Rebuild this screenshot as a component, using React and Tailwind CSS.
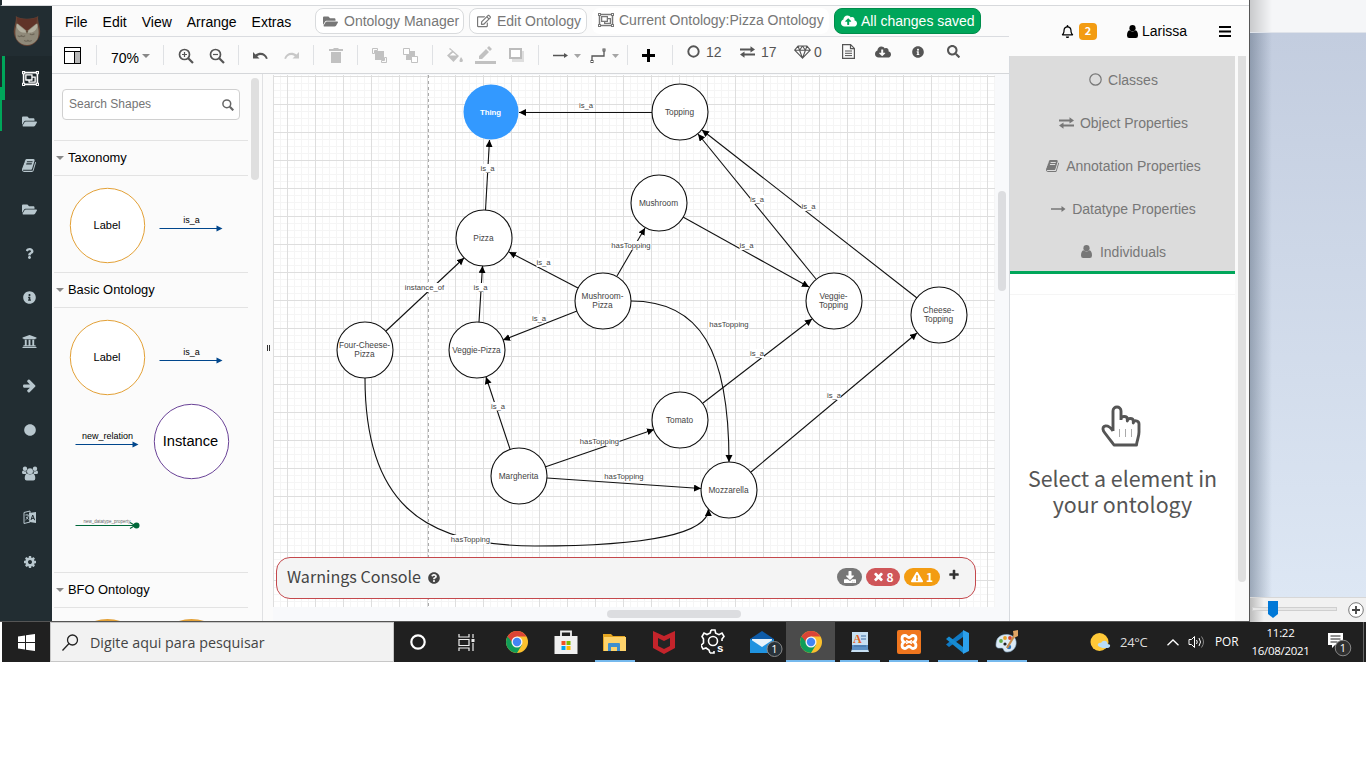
import React from "react";
import {
  FaRegObjectGroup, FaFolderOpen, FaQuestion, FaInfoCircle, FaUniversity,
  FaCircle, FaRegEdit, FaCloudUploadAlt, FaCloudDownloadAlt,
  FaRegBell, FaExclamationTriangle, FaQuestionCircle,
  FaDownload, FaSearch,
} from "react-icons/fa";

const ARIAL = "font-['Liberation_Sans',Arial,sans-serif]";
const SOURCE = "font-['Noto_Sans_CJK_SC',sans-serif]";
const SEGOE = "font-['Open_Sans','Noto_Sans',sans-serif]";

function Glyph({ size, d }) {
  return <svg width={size} height={size} viewBox="0 0 1792 1792" fill="currentColor"><path d={d} /></svg>;
}

const BOOK = "M1639 478q40 57 18 129l-275 906q-19 64-76.500 107.500t-122.500 43.500h-923q-77 0-148.500-53.500t-99.500-131.500q-24-67-2-127 0-4 3-27t4-37q1-8-3-21.500t-3-19.500q2-11 8-21t16.500-23.500 16.500-23.500q23-38 45-91.500t30-91.500q3-10 .5-30t-.5-28q3-11 17-28t17-23q21-36 42-92t25-90q1-9-2.500-32t.5-28q4-13 22-30.500t22-22.500q19-26 42.500-84.500t27.500-96.500q1-8-3-25.500t-2-26.500q2-8 9-18t18-23 17-21q8-12 16.500-30.500t15-35 16-36 19.500-32 26.500-23.500 36-11.500 47.500 5.500l-1 3q38-9 51-9h761q74 0 114 56t18 130l-274 906q-36 119-71.500 153.500t-128.500 34.500h-869q-27 0-38 15-11 16-1 43 24 70 144 70h923q29 0 56-15.500t35-41.500l300-987q7-22 5-57 38 15 59 43zm-1064 2q-4 13 2 22.500t20 9.500h608q13 0 25.500-9.500t16.500-22.500l21-64q4-13-2-22.500t-20-9.500h-608q-13 0-25.500 9.500t-16.500 22.500zm-83 256q-4 13 2 22.500t20 9.500h608q13 0 25.500-9.500t16.500-22.500l21-64q4-13-2-22.500t-20-9.500h-608q-13 0-25.500 9.500t-16.500 22.500z";
const ARROW = "M1600 960q0 54-37 91l-651 651q-39 37-91 37-51 0-90-37l-75-75q-38-38-38-91t38-91l293-293h-704q-52 0-84.500-37.500t-32.500-90.500v-128q0-53 32.500-90.500t84.500-37.500h704l-293-294q-38-36-38-90t38-90l75-75q38-38 90-38 53 0 91 38l651 651q37 35 37 90z";
const TIMES = "M1490 1322q0 40-28 68l-136 136q-28 28-68 28t-68-28l-294-294-294 294q-28 28-68 28t-68-28l-136-136q-28-28-28-68t28-68l294-294-294-294q-28-28-28-68t28-68l136-136q28-28 68-28t68 28l294 294 294-294q28-28 68-28t68 28l136 136q28 28 28 68t-28 68l-294 294 294 294q28 28 28 68z";
const PLUS = "M1600 736v192q0 40-28 68t-68 28h-416v416q0 40-28 68t-68 28h-192q-40 0-68-28t-28-68v-416h-416q-40 0-68-28t-28-68v-192q0-40 28-68t68-28h416v-416q0-40 28-68t68-28h192q40 0 68 28t28 68v416h416q40 0 68 28t28 68z";
const COG = "M1152 896q0-106-75-181t-181-75-181 75-75 181 75 181 181 75 181-75 75-181zm512-109v222q0 12-8 23t-20 13l-185 28q-19 54-39 91 35 50 107 138 10 12 10 25t-9 23q-27 37-99 108t-94 71q-12 0-26-9l-138-108q-44 23-91 38-16 136-29 186-7 28-36 28h-222q-14 0-24.500-8.500t-11.500-21.500l-28-184q-49-16-90-37l-141 107q-10 9-25 9-14 0-25-11-126-114-165-168-7-10-7-23 0-12 8-23 15-21 51-66.500t54-70.500q-27-50-41-99l-183-27q-13-2-21-12.500t-8-23.500v-222q0-12 8-23t19-13l186-28q14-46 39-92-40-57-107-138-10-12-10-24 0-10 9-23 26-36 98.500-107.500t94.500-71.500q13 0 26 10l138 107q44-23 91-38 16-136 29-186 7-28 36-28h222q14 0 24.500 8.500t11.500 21.500l28 184q49 16 90 37l142-107q9-9 24-9 13 0 25 10 129 119 165 170 7 8 7 22 0 12-8 23-15 21-51 66.500t-54 70.500q26 50 41 98l183 28q13 2 21 12.500t8 23.500z";

function Person() {
  return (
    <svg width="11" height="13" viewBox="0 0 11 13" fill="currentColor">
      <circle cx="5.500" cy="3.200" r="3.100" />
      <path d="M2.600 5.300q2.900 2.600 5.800 0Q11 6 11 10.500 11 13 8.800 13H2.200Q0 13 0 10.500 0 6 2.600 5.300z" />
    </svg>
  );
}

function People() {
  return (
    <svg width="16" height="15" viewBox="0 0 16 15" fill="currentColor">
      <circle cx="3" cy="2.800" r="2.200" /><circle cx="13" cy="2.800" r="2.200" />
      <path d="M1 4.500q2 1.500 3.700.5Q3.800 6.500 4.500 8H1.500Q0 8 0 6.500 0 5 1 4.500zM15 4.500q-2 1.500-3.700.5.9 1.500.2 3h3Q16 8 16 6.500 16 5 15 4.500z" />
      <circle cx="8" cy="5.200" r="3" />
      <path d="M5.300 7.500q2.700 2.200 5.400 0 2.600.7 2.600 4.700 0 2.300-2 2.300H4.700q-2 0-2-2.300 0-4 2.600-4.700z" />
    </svg>
  );
}

function Owl() {
  return (
    <svg width="28" height="32" viewBox="0 0 30 34" opacity=".85">
      <path d="M3 1 C8 5 22 5 27 1 C26 7 30 14 29 20 C27 29 21 33 15 33 C9 33 3 29 1 20 C0 14 4 7 3 1Z" fill="#6f4634" />
      <path d="M4 10 C7 6 12 9 15 17 C18 9 23 6 26 10 C28 15 28 22 26 26 C20 34 10 34 4 26 C2 22 2 15 4 10Z" fill="#a39a86" />
      <path d="M4 9 L15 18 L26 9 C27 13 24 18 20 18.500 L15 19 L10 18.500 C6 18 3 13 4 9Z" fill="#cdc8b4" />
      <path d="M4 2 C8 5 22 5 26 2 L25 9 L15 17 L5 9Z" fill="#6b3527" />
      <path d="M13.500 17 h3 l-1.500 3Z" fill="#6f5a44" />
      <path d="M5 22 q2 2 4 0 q2 2 4 0 M18 20 q2 2 5 0 M12 27 q2 2 4 0 q2 2 4 0" stroke="#7a705f" strokeWidth="1.200" fill="none" />
    </svg>
  );
}

function Exchange() {
  return (
    <svg width="15" height="12" viewBox="0 0 15 12" fill="currentColor">
      <path d="M0 2.500h10.500V.3L15 3.400l-4.500 3V4.500H0zM15 9.500H4.500v2.200L0 8.600l4.500-3v1.900H15z" />
    </svg>
  );
}

function LongArrow() {
  return (
    <svg width="15" height="8" viewBox="0 0 15 8" fill="currentColor">
      <path d="M0 3.200h10.500V.9L14.500 4l-4 3.100V4.800H0z" />
    </svg>
  );
}

function Gem() {
  return (
    <svg width="17" height="14" viewBox="0 0 17 14" fill="none" stroke="currentColor" strokeWidth="1.100" strokeLinejoin="round">
      <path d="M4 1h9l3.300 4.200L8.500 13.200.7 5.200zM.7 5.200h15.600M4 1l1.600 4.200 2.900 8 2.900-8L13 1M5.600 5.200 8.500 1l2.900 4.200" />
    </svg>
  );
}

function TextFile() {
  return (
    <svg width="13" height="15" viewBox="0 0 13 15" fill="none" stroke="currentColor">
      <path d="M.6.600h8l3.800 3.800v10H.6zM8.500.600v4h4" strokeWidth="1.200" />
      <path d="M3 7h7M3 9.300h7M3 11.600h7" />
    </svg>
  );
}

function Magnifier({ sign }) {
  return (
    <svg width="16" height="16" viewBox="0 0 16 16" fill="none" stroke="#555" strokeWidth="1.700">
      <circle cx="6.500" cy="6.500" r="5" />
      <path d="M10 10l5 5" strokeWidth="2.200" />
      <path d={sign === "+" ? "M4 6.500h5M6.500 4v5" : "M4 6.500h5"} strokeWidth="1.200" />
    </svg>
  );
}

function LanguageBook() {
  return (
    <svg width="14" height="15" viewBox="0 0 14 15">
      <path d="M1 2.500l6-1.500v11L1 13.500z" fill="none" stroke="#b8c7ce" />
      <path d="M6 3l7-1v11l-6.500-1z" fill="#b8c7ce" />
      <path d="M2.200 5h3.500M4 4v1M2.500 10c1.500-1 2.500-2.500 2.800-5M3 7l2.500 2.500" stroke="#b8c7ce" strokeWidth=".8" fill="none" />
      <path d="M8 10l1.700-5 2 5.200M8.700 8.400h2.300" stroke="#222d32" fill="none" />
    </svg>
  );
}

const railIcons = [
  <FaFolderOpen size={15} />, <Glyph size={15} d={BOOK} />, <FaFolderOpen size={15} />, <FaQuestion size={11} />,
  <FaInfoCircle size={13} />, <FaUniversity size={15} />, <Glyph size={15} d={ARROW} />, <FaCircle size={12} />,
  <People />, <LanguageBook />, <Glyph size={14} d={COG} />,
];

function Rail() {
  return (
    <nav className="relative flex w-[52px] shrink-0 flex-col bg-[#222d32] text-[#b8c7ce]">
      <div className="flex h-[50px] items-center justify-center pl-0.5"><Owl /></div>
      <div className="flex h-11 items-center justify-center bg-[#1e282c] pl-2 text-white">
        <FaRegObjectGroup size={17} />
      </div>
      {railIcons.map((icon, i) => (
        <div key={i} className="flex h-11 items-center justify-center pb-px pl-[7px]">{icon}</div>
      ))}
      <div className="absolute left-0.5 top-[50px] h-11 w-[3px] bg-[#00a65a]" />
      <div className="absolute left-0 top-[81px] h-11 w-0.5 bg-[#00a65a]" />
    </nav>
  );
}

function MenuBar() {
  return (
    <div className="flex h-[31px] items-center border-b border-[#dadce0] bg-[#fbfbfb] text-sm text-black">
      <div className="flex w-[263px] shrink-0 gap-[15px] pl-[13px] pt-0.5">
        <span>File</span><span>Edit</span><span>View</span><span>Arrange</span><span>Extras</span>
      </div>
      <div className="flex h-[26px] w-[149px] items-center rounded-lg border border-[#d9dbdd] bg-white pl-[7px] text-[#777]">
        <FaFolderOpen size={15} /><span className="ml-[6px] whitespace-nowrap">Ontology Manager</span>
      </div>
      <div className="ml-[5px] flex h-[26px] w-[118px] items-center rounded-lg border border-[#d9dbdd] bg-white pl-[7px] text-[#777]">
        <FaRegEdit size={14} /><span className="ml-[6px] whitespace-nowrap">Edit Ontology</span>
      </div>
      <div className="ml-[5px] flex h-[26px] w-[237px] items-center rounded-lg bg-white pb-[3px] pl-[6px] text-[#777]">
        <FaRegObjectGroup size={16} /><span className="ml-[5px] whitespace-nowrap">Current Ontology:Pizza Ontology</span>
      </div>
      <div className="ml-[5px] flex h-[26px] w-[147px] items-center rounded-lg border border-[#008d4c] bg-[#00a65a] pl-[6px] text-white">
        <FaCloudUploadAlt size={16} /><span className="ml-[4px] whitespace-nowrap">All changes saved</span>
      </div>
    </div>
  );
}

const Sep = () => <div className="h-5 w-px shrink-0 bg-[#dfe1e4]" />;
const Slot = ({ children }) => <div className="flex w-[31px] shrink-0 items-center justify-center">{children}</div>;

function Toolbar() {
  return (
    <div className="flex h-[37px] items-center border-b border-[#d5d7da] bg-[#fbfbfb]">
      <div className="w-11 shrink-0 pl-3">
        <svg width="17" height="17" viewBox="0 0 17 17">
          <rect x=".5" y=".5" width="16" height="16" fill="#fff" stroke="#000" />
          <path d="M11 5h5v11h-5z" fill="#b5b5b5" />
          <path d="M0 4.500h17M10.500 4.500V16" stroke="#000" />
        </svg>
      </div>
      <Sep />
      <div className="flex w-[66px] shrink-0 items-center pl-[14px] pt-[5px] text-sm text-black">
        70%<svg width="8" height="4" viewBox="0 0 8 4" className="mb-1 ml-[3px]"><path d="M0 0h8L4 4z" fill="#888" /></svg>
      </div>
      <Sep />
      <div className="flex w-[74px] shrink-0 justify-center pt-px"><Slot><Magnifier sign="+" /></Slot><Slot><Magnifier sign="-" /></Slot></div>
      <Sep />
      <div className="flex w-[74px] shrink-0 justify-center pt-0.5">
        <Slot><svg width="15" height="8" viewBox="0 0 15 8"><path d="M0 0v6.500h6.500L4.200 4.300C7.500 2 11.500 3 13 7l1.800-.6C12.800 1 7.500-.8 2.500 2.400z" fill="#555" /></svg></Slot>
        <Slot><svg width="15" height="8" viewBox="0 0 15 8"><path d="M15 0v6.500H8.500l2.300-2.200C7.500 2 3.500 3 2 7L.2 6.400C2.200 1 7.500-.8 12.500 2.400z" fill="#c8c8c8" /></svg></Slot>
      </div>
      <Sep />
      <div className="flex w-[43px] shrink-0 justify-center">
        <Slot><svg width="14" height="15" viewBox="0 0 14 15" fill="#c1c1c1"><path d="M0 1h4l1-1h4l1 1h4v2H0zM2 4h10v11H2z" /></svg></Slot>
      </div>
      <Sep />
      <div className="flex w-[74px] shrink-0 justify-center">
        <Slot><svg width="15" height="15" viewBox="0 0 15 15"><path d="M.5.500h5v2H2.500v3h-2zM14.500 14.500h-5v-2h3v-3h2z" fill="none" stroke="#c1c1c1" /><path d="M3 3h9v9H3z" fill="#c1c1c1" /></svg></Slot>
        <Slot><svg width="15" height="15" viewBox="0 0 15 15"><path d="M5 3h7v9H3V8z" fill="#c1c1c1" /><path d="M.5.500h6v6h-6zM8.500 8.500h6v6h-6z" fill="#fff" stroke="#c1c1c1" /></svg></Slot>
      </div>
      <Sep />
      <div className="flex w-[105px] shrink-0 justify-center">
        <Slot><svg width="16" height="15" viewBox="0 0 16 15" fill="#c1c1c1"><path d="M3 0l9 8-5.500 6L0 7.500 5 3 2 1zM14 9c3 4 2 5 0 5s-2-1 0-5z" /><path d="M6 4.500L2.500 7.500h7z" fill="#fff" /></svg></Slot>
        <Slot><svg width="21" height="18" viewBox="0 0 21 18" fill="#c1c1c1"><path d="M0 15h21v3H0zM4 10l7-7 3 3-7 7H4zM12 2l2-2 3 3-2 2z" /></svg></Slot>
        <Slot><svg width="15" height="14" viewBox="0 0 15 14"><path d="M3 3h12v11H3z" fill="#dedede" /><rect x="1" y="1" width="11" height="9" fill="#fff" stroke="#bcbcbc" strokeWidth="2" /></svg></Slot>
      </div>
      <Sep />
      <svg width="88" height="24" viewBox="0 0 88 24" className="shrink-0">
        <path d="M14 12.500h12M53 18v-5h12V8" fill="none" stroke="#555" strokeWidth="1.300" />
        <path d="M25 10l4 2.500-4 2.500z" fill="#555" />
        <rect x="52" y="17.500" width="2" height="2" fill="#fff" stroke="#555" /><rect x="64" y="6" width="2" height="2" fill="#fff" stroke="#555" />
        <path d="M35 11h7l-3.500 4zM73 11h7l-3.500 4z" fill="#a5a5a5" />
      </svg>
      <Sep />
      <div className="w-11 shrink-0 pl-[14px]">
        <svg width="13" height="13" viewBox="0 0 13 13"><path d="M5 0h3v5h5v3H8v5H5V8H0V5h5z" /></svg>
      </div>
      <Sep />
      <div className="flex h-5 shrink-0 items-center pb-[7px] pl-[14px] text-sm text-[#555]">
        <svg width="13" height="13" viewBox="0 0 13 13"><circle cx="6.500" cy="6.500" r="5.200" fill="none" stroke="#555" strokeWidth="1.900" /></svg>
        <span className="ml-[6px] w-[34px]">12</span>
        <Exchange /><span className="ml-[6px] w-[33px]">17</span>
        <Gem /><span className="ml-[3px] w-[28px]">0</span>
        <TextFile />
        <span className="ml-[20px]"><FaCloudDownloadAlt size={16} /></span>
        <span className="ml-[21px]"><FaInfoCircle size={12} /></span>
        <span className="ml-[23px]"><FaSearch size={13} /></span>
      </div>
    </div>
  );
}

function SectionTitle({ children }) {
  return (
    <div className="flex h-9 items-center border-y border-[#e3e3e3] text-[12.900px] text-black">
      <svg width="8" height="4" viewBox="0 0 8 4" className="ml-[2px] mr-1"><path d="M0 0h8L4 4z" fill="#888" /></svg>
      {children}
    </div>
  );
}

function ShapeArrow({ x, y, label, color = "#00468c" }) {
  return (
    <g>
      <path d={`M${x} ${y + 0.5}h58`} stroke={color} strokeWidth="1.100" />
      <path d={`M${x + 57} ${y - 2.5}l6 3-6 3z`} fill={color} />
      <text x={x + 32} y={y - 5} fontSize="9" textAnchor="middle">{label}</text>
    </g>
  );
}

function Shapes() {
  return (
    <aside className="flex w-[211px] shrink-0 border-r border-[#e0e1e3] bg-[#fbfbfb] pl-0.5">
      <div className="flex w-[194px] flex-col overflow-hidden">
        <div className="h-[66px] pl-2 pt-[15px]">
          <div className="flex h-[31px] w-[178px] items-center justify-between rounded border border-[#d0d0d0] bg-white pl-[6px] pr-[5px] text-xs text-[#757575]">
            <span className="pb-px">Search Shapes</span>
            <svg width="12" height="12" viewBox="0 0 12 12" fill="none" stroke="#666"><circle cx="4.800" cy="4.800" r="3.900" strokeWidth="1.500" /><path d="M7.800 7.800l3.500 3.500" strokeWidth="2.200" /></svg>
          </div>
        </div>
        <SectionTitle>Taxonomy</SectionTitle>
        <svg width="194" height="96" viewBox="54 176 194 96" className="shrink-0">
          <circle cx="107.500" cy="225.500" r="37.200" fill="#fff" stroke="#e3a137" />
          <text x="107" y="229" fontSize="11" textAnchor="middle">Label</text>
          <ShapeArrow x={159.500} y={228} label="is_a" />
        </svg>
        <SectionTitle>Basic Ontology</SectionTitle>
        <svg width="194" height="264" viewBox="54 308 194 264" className="shrink-0">
          <circle cx="107.500" cy="357.500" r="37.200" fill="#fff" stroke="#e3a137" />
          <text x="107" y="361" fontSize="11" textAnchor="middle">Label</text>
          <ShapeArrow x={159.500} y={360} label="is_a" />
          <ShapeArrow x={75.500} y={444} label="new_relation" />
          <circle cx="191.500" cy="441.500" r="37.200" fill="#fff" stroke="#6a4397" />
          <text x="190.500" y="446" fontSize="14.700" textAnchor="middle">Instance</text>
          <path d="M75.500 525.500h60M130 522.500l5 3-5 3" stroke="#00683a" fill="none" strokeWidth="1.200" />
          <circle cx="136.500" cy="525.500" r="3" fill="#00683a" />
          <text x="107" y="523" fontSize="4.500" textAnchor="middle" fill="#666">new_datatype_property</text>
        </svg>
        <SectionTitle>BFO Ontology</SectionTitle>
        <svg width="194" height="13" viewBox="54 608 194 13" className="shrink-0">
          <circle cx="107.500" cy="657" r="37" fill="#fff" stroke="#e3a137" strokeWidth="2" />
          <circle cx="191.500" cy="657" r="37" fill="#fff" stroke="#e3a137" strokeWidth="2" />
        </svg>
      </div>
      <div className="ml-[3px] mt-1 h-[102px] w-2 rounded bg-[#dfdfdf]" />
    </aside>
  );
}

const nodes = [
  [680, 112, "Topping"], [484, 238, "Pizza"], [659, 203, "Mushroom"], [603, 301, "Mushroom-", "Pizza"],
  [834, 301, "Veggie-", "Topping"], [939, 315, "Cheese-", "Topping"], [365, 350, "Four-Cheese-", "Pizza"],
  [477, 350, "Veggie-Pizza"], [680, 420, "Tomato"], [519, 476, "Margherita"], [729, 490, "Mozzarella"],
];

const edges = [
  "M652 112.500H519", "M485.500 210L489.500 140", "M386 331L464 258", "M479 322L482.500 266",
  "M578 288L509 252", "M577 311L503 340", "M617 276L645 228", "M683 217L809 287",
  "M816 279L698 134", "M917 298L702 130", "M703 403L812 319", "M751 472L917 333",
  "M510 449L486 377", "M545 467L654 429.500", "M547 478L701 488.500",
  "M631 301C700 301 729 350 729 462", "M365 378C365 500 420 546 535 546C650 546 708 533 708.500 509",
];

const labels = [
  [586, 105.500, "is_a"], [487.500, 168.500, "is_a"], [424.500, 287.500, "instance_of"], [480.500, 287.500, "is_a"],
  [543.500, 262.500, "is_a"], [539, 318.500, "is_a"], [631, 245.500, "hasTopping"], [746.500, 245.500, "is_a"],
  [757, 199.500, "is_a"], [808.500, 206.500, "is_a"], [757, 353.500, "is_a"], [834, 395.500, "is_a"],
  [498, 406.500, "is_a"], [599.500, 441.500, "hasTopping"], [624, 476.500, "hasTopping"], [729, 324.500, "hasTopping"],
  [470.500, 539.500, "hasTopping"],
];

function Diagram() {
  return (
    <svg width="722" height="533" viewBox="273 74 722 533" className="block shrink-0">
      <defs>
        <pattern id="grid" x="287" y="76" width="28" height="28" patternUnits="userSpaceOnUse">
          <path d="M7.500 0v28M14.500 0v28M21.500 0v28M0 7.500h28M0 14.500h28M0 21.500h28" stroke="#f5f5f5" />
          <path d="M.5 0v28M0 .5h28" stroke="#dedede" />
        </pattern>
        <marker id="tip" markerUnits="userSpaceOnUse" markerWidth="8" markerHeight="8" refX="7" refY="3.500" orient="auto">
          <path d="M0 0l7 3.500L0 7z" />
        </marker>
      </defs>
      <rect x="273" y="75" width="722" height="532" fill="#fff" />
      <rect x="273" y="75" width="722" height="532" fill="url(#grid)" />
      <path d="M273.500 75v532" stroke="#dedede" />
      <path d="M428.500 75v532" stroke="#aaa" strokeDasharray="3 3" />
      {edges.map((d, i) => <path key={i} d={d} fill="none" stroke="#111" strokeWidth="1.100" markerEnd="url(#tip)" />)}
      {nodes.map(([x, y, a, b]) => (
        <g key={`${x}-${y}`}>
          <circle cx={x} cy={y} r="28" fill="#fff" stroke="#111" strokeWidth="1.100" />
          <text x={x - 0.5} y={b ? y - 2 : y + 3} fontSize="8.300" fill="#444" textAnchor="middle">{a}</text>
          {b && <text x={x - 0.5} y={y + 7} fontSize="8.300" fill="#444" textAnchor="middle">{b}</text>}
        </g>
      ))}
      <circle cx="491" cy="112" r="27.500" fill="#3399ff" />
      <text x="490.500" y="115" fontSize="7.800" fontWeight="bold" fill="#fff" textAnchor="middle">Thing</text>
      {labels.map(([x, y, t], i) => {
        const w = t === "is_a" ? 14 : 40;
        return (
          <g key={i}>
            <rect x={x - w / 2} y={y - 4.5} width={w} height="9" fill="#fff" />
            <text x={x} y={y + 2.5} fontSize="7.700" fill="#444" textAnchor="middle">{t}</text>
          </g>
        );
      })}
    </svg>
  );
}

function WarningsConsole() {
  return (
    <div className={`absolute left-[3px] top-[483px] flex h-[42px] w-[700px] items-center justify-between rounded-[14px] border border-[#c4484c] bg-[#f4f4f4] pl-[10px] pr-[15px] text-[#444] ${SOURCE}`}>
      <div className="flex items-center pb-1 text-[16.100px] leading-none">
        <span className="w-[135px] whitespace-nowrap">Warnings Console</span>
        <span className="ml-[6px] mt-[3px]"><FaQuestionCircle size={12} /></span>
      </div>
      <div className="flex items-center pb-[3px] text-xs font-bold leading-none text-white">
        <span className="flex h-[18px] w-[25px] items-center justify-center rounded-full bg-[#777]"><FaDownload size={12} /></span>
        <span className="ml-1 flex h-[18px] w-[34px] items-center justify-center gap-px rounded-full bg-[#cf5659]"><Glyph size={13} d={TIMES} /><span>8</span></span>
        <span className="ml-1 flex h-[18px] w-9 items-center justify-center gap-[3px] rounded-full bg-[#f39c12]"><FaExclamationTriangle size={12} /><span>1</span></span>
        <span className="mb-[3px] ml-2 text-[#333]"><Glyph size={12} d={PLUS} /></span>
      </div>
    </div>
  );
}

function PropertyPanel() {
  const rows = [
    [<svg width="13" height="13" viewBox="0 0 13 13"><circle cx="6.500" cy="6.500" r="5.700" fill="none" stroke="currentColor" strokeWidth="1.200" /></svg>, "Classes"],
    [<Exchange />, "Object Properties"], [<Glyph size={14} d={BOOK} />, "Annotation Properties"],
    [<LongArrow />, "Datatype Properties"], [<span className="mr-0.5"><Person /></span>, "Individuals"],
  ];
  return (
    <aside className="flex w-60 shrink-0 flex-col bg-white">
      <div className="flex h-[50px] items-center bg-[#fbfbfb] text-sm text-black">
        <span className="ml-[52px]"><FaRegBell size={13} /></span>
        <span className={`ml-[5px] flex h-[17px] w-[18px] items-center justify-center rounded-sm bg-[#f39c12] text-[11px] font-bold text-white ${SOURCE}`}>2</span>
        <span className="ml-[30px]"><Person /></span>
        <span className="ml-[4px] w-[45px]">Larissa</span>
        <svg width="12" height="11" viewBox="0 0 12 11" className="ml-[32px]"><path d="M0 1h12M0 5.500h12M0 10h12" stroke="#000" strokeWidth="2" /></svg>
      </div>
      <div className="flex grow">
        <div className="flex w-[226px] flex-col border-l border-[#d7dade]">
          <div className="flex h-[218px] flex-col border-b-[3px] border-[#00a65a] bg-[#dcdcdc] pt-[2px] text-sm text-[#777]">
            {rows.map(([icon, text]) => (
              <div key={text} className="flex h-[43px] shrink-0 items-center justify-center gap-[6px] pl-0.5">{icon}<span>{text}</span></div>
            ))}
          </div>
          <div className="h-[21px] border-b border-[#f5f5f5]" />
          <div className="flex flex-col items-center pt-[110px] text-[#555]">
            <svg width="40" height="42" viewBox="0 0 40 42" fill="none" stroke="#555" strokeWidth="2.900" strokeLinejoin="round" className="mr-[3px]">
              <path d="M12 26V6C12 .6 20 .6 20 6v9M20 14c0-3.300 6.300-3.300 6.300 0v2c0-3.300 6-3.300 6 0v2c0-3.300 5.700-2.800 5.700 1v8c0 5-2 8-2.500 13H13C10 36 6 31 2.500 26 0 20 7 18.500 12 26" />
              <path d="M18.500 24v8M24.500 24v8M30.500 24v8" stroke="#aaa" strokeWidth="1" />
            </svg>
            <p className={`mt-[18px] text-center text-[21.400px] leading-[26px] ${SOURCE}`}>
              <span className="block whitespace-nowrap">Select a element in</span>your ontology
            </p>
          </div>
        </div>
        <div className="flex w-[14px] justify-center bg-[#fafafa]"><div className="h-[526px] w-2 rounded-b bg-[#dfdfdf]" /></div>
      </div>
    </aside>
  );
}

function DesktopApp() {
  return (
    <div className="flex w-[117px] shrink-0 flex-col border-l border-[#555]">
      <div className="h-[33px] border-b border-[#dfe3ea] bg-[linear-gradient(90deg,#c9cacc,#f5f6f8_22px)]" />
      <div className="grow bg-[linear-gradient(90deg,rgba(90,105,125,.5),transparent_22px),linear-gradient(180deg,#c3cddf,#dde7f4)]" />
      <div className="h-[25px] border-t border-[#d7d7d7] bg-[linear-gradient(90deg,#bbb,#f1f1f1_14px)]">
        <svg width="116" height="24" viewBox="1250 598 116 24">
          <rect x="1252.500" y="607.500" width="84" height="3" fill="#e7e7e7" stroke="#cfcfcf" />
          <path d="M1268 601h10v13l-5 4-5-4z" fill="#0078d7" />
          <circle cx="1356" cy="610" r="7.300" fill="#fff" stroke="#777" /><path d="M1352 610h8M1356 606v8" stroke="#444" strokeWidth="1.800" />
        </svg>
      </div>
    </div>
  );
}

function Chrome() {
  return (
    <svg width="24" height="24" viewBox="0 0 24 24">
      <circle cx="12" cy="12" r="11" fill="#fbc02d" />
      <path d="M2.500 6.500A11 11 0 0 0 12 23l5-8.300-5-2.700z" fill="#109d58" />
      <path d="M2.500 6.500A11 11 0 0 1 21.500 6.500H12L7 12z" fill="#db4437" />
      <circle cx="12" cy="12" r="5.500" fill="#f5f5f5" /><circle cx="12" cy="12" r="4.200" fill="#4285f4" />
    </svg>
  );
}

const taskApps = [
  { icon: <svg width="18" height="18" viewBox="0 0 18 18" className="mr-0.5"><circle cx="9" cy="9" r="6.700" fill="none" stroke="#fff" strokeWidth="2.200" /></svg> },
  { icon: <svg width="17" height="17" viewBox="0 0 17 17" className="mr-0.5" fill="none" stroke="#eee" strokeWidth="1.200"><path d="M1 0v3h10V0M1 17v-3h10v3M1 5.500h10v6H1zM15 0v4M15 9v8" /><path d="M13.500 5h3v3h-3z" fill="#eee" stroke="none" /></svg> },
  { icon: <Chrome /> },
  { icon: <svg width="24" height="26" viewBox="0 0 24 26"><path d="M7 8V2.500h10V8" fill="none" stroke="#eee" strokeWidth="1.800" /><path d="M.5 7h23v18h-23z" fill="#f0f0f0" /><path d="M7.500 12h4v4h-4z" fill="#f25022" /><path d="M12.500 12h4v4h-4z" fill="#7fba00" /><path d="M7.500 17h4v4h-4z" fill="#00a4ef" /><path d="M12.500 17h4v4h-4z" fill="#ffb900" /></svg> },
  { on: true, icon: <svg width="23" height="19" viewBox="0 0 23 19"><path d="M0 1h8l2 2h12v15H0z" fill="#e4a520" /><path d="M1 4h22v14H1z" fill="#fed36b" /><path d="M5 18V11q0-1 1-1h10q1 0 1 1v7h-3v-4H8v4z" fill="#3f8fce" /></svg> },
  { icon: <svg width="22" height="24" viewBox="0 0 22 24"><path d="M0 1l11 5L22 1v17l-11 6L0 18z" fill="#c4242b" /><path d="M5 8l6 3 6-3v8l-6 3-6-3z" fill="#242424" /></svg> },
  { icon: <svg width="24" height="26" viewBox="0 0 24 26" fill="none" stroke="#fff" strokeWidth="1.600"><path d="M10 1h4l.7 3.200 3.300 1.500L21 4l2 3.500-2 2.500v2M9 24l-1-3-3-2-3 1-2-3.500 2.500-2.500V10L1 7.500 3 4l3 1.500 3.300-1.500L10 1M9 24h4v-2" /><circle cx="12" cy="12" r="4.500" /><text x="16" y="22.500" fontSize="11.500" fontWeight="bold" fill="#fff" stroke="none" fontFamily="Liberation Sans">s</text></svg> },
  { icon: <svg width="34" height="30" viewBox="0 0 34 30" className="ml-2 mt-1"><path d="M1 10L13 2l12 8v14H1z" fill="#0d5ba8" /><path d="M3 10h20v8H3z" fill="#e8f3fb" /><path d="M1 10l12 8 12-8v14H1z" fill="#1f93e0" /><circle cx="25.500" cy="20" r="7.500" fill="#28323a" stroke="#888" /><text x="25.500" y="24" fontSize="11" fill="#fff" textAnchor="middle">1</text></svg> },
  { on: true, active: true, icon: <Chrome /> },
  { on: true, icon: <svg width="18" height="22" viewBox="0 0 18 22"><path d="M1 1h16v17l1 3H0l1-3z" fill="#c7e0f3" /><path d="M1 14h16v5H1z" fill="#5a8fc4" /><path d="M10 5h5M10 8h5M3 15h12" stroke="#3f6fa4" /><text x="2" y="12" fontSize="12" fontWeight="bold" fill="#e2641e" fontFamily="Liberation Serif">A</text></svg> },
  { on: true, icon: <svg width="24" height="24" viewBox="0 0 24 24"><rect width="24" height="24" rx="2" fill="#f0761e" /><path d="M8 5.500c2 0 2 2 4 2s2-2 4-2c4 0 3.500 5 1 6.500 2.500 1.500 3 6.500-1 6.500-2 0-2-2-4-2s-2 2-4 2c-4 0-3.500-5-1-6.500-2.500-1.500-3-6.500 1-6.500z" fill="none" stroke="#fff" strokeWidth="2.800" /><path d="M9 10.500l3 1.500 3-1.500M9 13.500l3-1.500 3 1.500" fill="none" stroke="#fff" strokeWidth="1.500" /></svg> },
  { on: true, icon: <svg width="25" height="24" viewBox="0 0 25 24"><path d="M18 1v6L4 17l-3-2.500z" fill="#0f79c4" /><path d="M18 23v-6L4 6.500 1 9z" fill="#168bd2" /><path d="M18 0l6 3v18l-6 3z" fill="#2ca0ec" /></svg> },
  { on: true, icon: <svg width="24" height="24" viewBox="0 0 24 24"><path d="M3 8C8 2 20 4 21 11c1 6-3 11-9 11-4 0-3-4-5-4s-6 1-6-3c0-3 1-6 2-7z" fill="#dceaf5" stroke="#8db2d0" strokeWidth=".6" /><circle cx="6" cy="11" r="1.900" fill="#61ad47" /><circle cx="10" cy="8" r="1.900" fill="#e5a22c" /><circle cx="15" cy="8" r="1.900" fill="#d7462b" /><circle cx="14" cy="17" r="2.200" fill="#2d74bf" /><circle cx="10" cy="14" r="1.600" fill="#222" /><path d="M21 3L12 18" stroke="#c78a49" strokeWidth="2.200" /><path d="M18 1l5-1v6l-4 2z" fill="#e0a665" /></svg> },
];

function Taskbar() {
  return (
    <footer className={`ml-0.5 flex h-10 shrink-0 bg-[#202020] text-white ${SEGOE}`}>
      <div className="flex w-12 shrink-0 items-center justify-center">
        <svg width="17" height="17" viewBox="0 0 17 17" fill="#fff"><path d="M0 2.400l7-1V8H0zM8 1.200L17 0v8H8zM0 9h7v6.600l-7-1zM8 9h9v8l-9-1.200z" /></svg>
      </div>
      <div className="flex w-[344px] shrink-0 items-center border border-[#c7c7c7] bg-[#f2f2f2] pl-[11px] text-[#444]">
        <svg width="17" height="17" viewBox="0 0 17 17" fill="none" stroke="#222" strokeWidth="1.300"><circle cx="10.500" cy="6" r="5" /><path d="M7 9.500L.5 16.500" /></svg>
        <span className="ml-[11px] whitespace-nowrap pt-px text-[14.300px]">Digite aqui para pesquisar</span>
      </div>
      {taskApps.map((app, i) => (
        <div key={i} className={app.active ? "flex w-[49px] shrink-0 flex-col items-center bg-[#4b4b4b]" : "flex w-[49px] shrink-0 flex-col items-center"}>
          <div className="flex h-[38px] items-center justify-center pt-0.5">{app.icon}</div>
          {app.on && <div className={app.active ? "h-0.5 w-full bg-[#76b9ed]" : "h-0.5 w-10 bg-[#76b9ed]"} />}
        </div>
      ))}
      <div className="flex grow items-center pl-[59px] text-xs">
        <svg width="21" height="20" viewBox="0 0 21 20"><circle cx="9.500" cy="10" r="9" fill="#ffc938" /><path d="M10 15c-4-1-2-5 1-4 2-4 7-2 6.500 1 4 0 3 4 0 4h-5z" fill="#b9ddf6" /></svg>
        <span className="ml-[9px] w-[30px] whitespace-nowrap pt-0.5 text-[13px] tracking-[-0.300px] text-[#ddd]">24°C</span>
        <svg width="12" height="7" viewBox="0 0 12 7" className="ml-[17px]" fill="none" stroke="#fff" strokeWidth="1.300"><path d="M.5 6.300L6 1l5.500 5.300" /></svg>
        <svg width="17" height="14" viewBox="0 0 17 14" className="ml-[9px]" fill="none" stroke="#fff"><path d="M1 4.500h2.500l3-3v11l-3-3H1zM8.500 5q1.500 2 0 4M11 3q3 4 0 8" /><path d="M13.500 1.500q4 5.500 0 11" stroke="#888" /></svg>
        <span className="ml-[10px] w-[25px] text-[11.800px]">POR</span>
        <div className="ml-[9px] flex w-[63px] flex-col items-center whitespace-nowrap text-[11.500px] leading-[18px] tracking-[-0.300px]"><span>11:22</span><span>16/08/2021</span></div>
        <svg width="26" height="26" viewBox="0 0 26 26" className="ml-[15px] mt-1">
          <path d="M1 2h15v12H8l-3 3v-3H1z" fill="#fff" /><path d="M3.500 5h10M3.500 8h10M3.500 11h7" stroke="#222" />
          <circle cx="16" cy="17" r="7.800" fill="#303030" stroke="#888" /><text x="16" y="21" fontSize="11" fill="#fff" textAnchor="middle">1</text>
        </svg>
        <div className="ml-[10px] h-10 w-px bg-[#666]" />
      </div>
    </footer>
  );
}

export default function App() {
  return (
    <main className={`flex h-[768px] w-[1366px] flex-col overflow-hidden bg-white ${ARIAL}`}>
      <div className="flex h-[622px] shrink-0">
        <div className="flex w-[1249px] shrink-0 flex-col border-b border-[#555]">
          <div className="h-1.5 shrink-0 border-b border-l-2 border-b-[#d7d9dc] border-l-[#222d32]" />
          <div className="flex min-h-0 grow">
            <Rail />
            <div className="flex w-[957px] shrink-0 flex-col">
              <MenuBar />
              <Toolbar />
              <div className="flex min-h-0 grow bg-[#f8f9fb]">
                <Shapes />
                <div className="flex w-[10px] shrink-0 items-center justify-center bg-[#fbfbfb]">
                  <div className="h-1.5 w-[3px] border-x border-[#333]" />
                </div>
                <div className="relative flex w-[736px] shrink-0">
                  <div className="flex flex-col">
                    <Diagram />
                    <div className="ml-[334px] mt-[3px] h-2 w-[134px] rounded bg-[#dcdde0]" />
                  </div>
                  <div className="ml-[3px] mt-[117px] h-[100px] w-2 rounded bg-[#dcdde0]" />
                  <WarningsConsole />
                </div>
              </div>
            </div>
            <PropertyPanel />
          </div>
        </div>
        <DesktopApp />
      </div>
      <Taskbar />
    </main>
  );
}
